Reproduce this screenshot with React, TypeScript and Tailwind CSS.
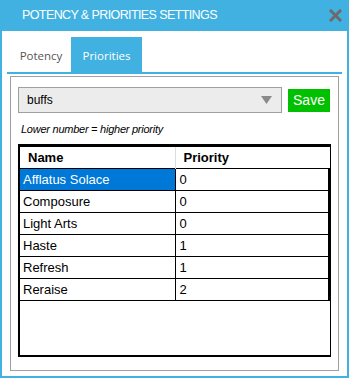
const rows = [
  { name: "Afflatus Solace", priority: 0 },
  { name: "Composure", priority: 0 },
  { name: "Light Arts", priority: 0 },
  { name: "Haste", priority: 1 },
  { name: "Refresh", priority: 1 },
  { name: "Reraise", priority: 2 },
]

export default function App() {
  return (
    <div className="w-[349px] h-[378px] flex flex-col bg-white border-x-2 border-b-2 border-[#41b1e1] font-['Liberation_Sans',Arial,sans-serif]">
      <div className="h-[31px] bg-[#41b1e1] flex items-center justify-between pl-[20px] pr-[5px] shrink-0">
        <span className="text-white text-[12.5px] leading-none tracking-[-0.6px]">POTENCY &amp; PRIORITIES SETTINGS</span>
        <svg width="13" height="13" viewBox="0 0 13 13" className="mb-[1px]">
          <path d="M2 2 L11 11 M11 2 L2 11" stroke="#6b6b6b" strokeWidth="3" strokeLinecap="square" />
        </svg>
      </div>
      <div className="flex-1 flex flex-col px-[5px] pt-[6px]">
        <div className="flex h-[37px] border-b-2 border-[#41b1e1] font-['Open_Sans',sans-serif] text-[11.5px]">
          <div className="w-[64px] flex items-center justify-center text-[#555] pt-[2px] pl-[4px]">Potency</div>
          <div className="w-[71px] flex items-center justify-center bg-[#41b1e1] text-white pt-[2px]">Priorities</div>
        </div>
        <div className="mx-[3px] mt-[2px] h-[295px] border border-[#a0a0a0] px-[7px] pt-[10px]">
          <div className="flex gap-[6px] items-center">
            <div className="w-[264px] h-[26px] bg-[#ececec] border border-[#a0a0a0] flex items-center justify-between pl-[8px] pr-[9px] text-[12px] text-black">
              <span>buffs</span>
              <svg width="11" height="8" viewBox="0 0 11 8">
                <path d="M0 0 H11 L5.5 8 Z" fill="#8a8a8a" />
              </svg>
            </div>
            <button type="button" className="w-[42px] h-[23px] bg-[#00c000] text-white text-[14px] leading-none">
              Save
            </button>
          </div>
          <p className="italic text-[11px] text-black mt-[8px] pl-[3px] tracking-[-0.25px]">Lower number = higher priority</p>
          <div className="mt-[6px] h-[213px] border-2 border-black border-t-[3px] border-r-[1px]">
            <table className="w-[310px] border-collapse text-[13px] text-black">
              <thead>
                <tr className="h-[22px]">
                  <th className="w-[155px] text-left font-bold pl-[8px] border-r border-[#ddd]">Name</th>
                  <th className="text-left font-bold pl-[8px]">Priority</th>
                </tr>
              </thead>
              <tbody>
                {rows.map((r, i) => (
                  <tr key={r.name} className="h-[22px]">
                    <td
                      className={
                        i === 0
                          ? "border border-black border-l-0 pl-[3px] bg-[#0078d7] text-white"
                          : "border border-black border-l-0 pl-[3px]"
                      }
                    >
                      {r.name}
                    </td>
                    <td className="border border-black pl-[4px] border-r-2">{r.priority}</td>
                  </tr>
                ))}
              </tbody>
            </table>
          </div>
        </div>
      </div>
    </div>
  )
}
